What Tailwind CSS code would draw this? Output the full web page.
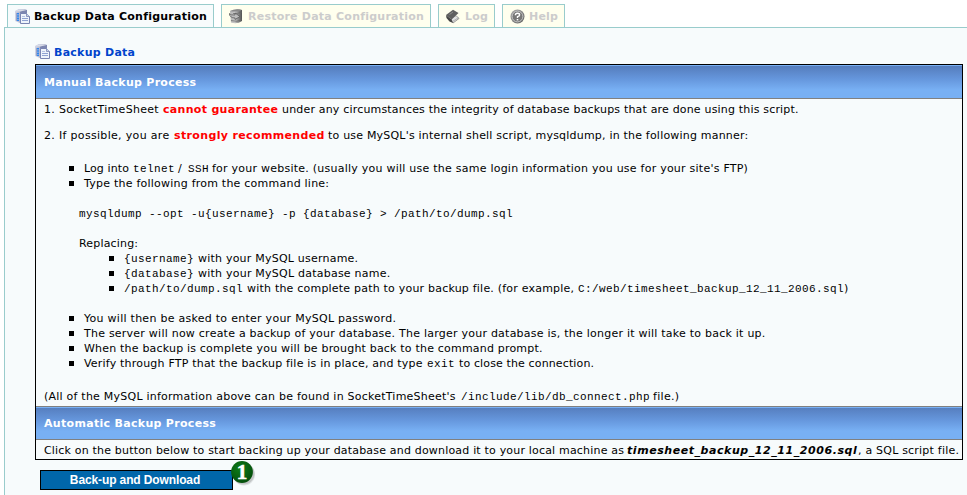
<!DOCTYPE html>
<html lang="en">
<head>
<meta charset="utf-8">
<title>Backup Data Configuration</title>
<script src="https://cdn.jsdelivr.net/npm/@tailwindcss/browser@4"></script>
</head>
<body class="h-[495px] overflow-hidden bg-white font-['DejaVu_Sans',sans-serif] text-[11px] leading-[15px] text-black">
<svg class="absolute size-0">
  <defs>
    <linearGradient id="srv" x1="0" x2="1"><stop offset="0" stop-color="#d3d6e6"/><stop offset=".5" stop-color="#a9afcb"/><stop offset="1" stop-color="#8088b0"/></linearGradient>
    <linearGradient id="drum" x1="0" x2="1"><stop offset="0" stop-color="#b4b4b4"/><stop offset=".4" stop-color="#c6c6c6"/><stop offset="1" stop-color="#505050"/></linearGradient>
    <linearGradient id="ball" x1="0" y1="0" x2="1" y2="1"><stop offset="0" stop-color="#aaa"/><stop offset="1" stop-color="#5c5c5c"/></linearGradient>
    <radialGradient id="green" cx=".4" cy=".35" r=".7"><stop offset="0" stop-color="#0d7d18"/><stop offset="1" stop-color="#044d0b"/></radialGradient>
    <symbol id="backup" viewBox="0 0 15 15">
      <path d="M0 2 4 0h5l3 1v10l-7 3-5-2z" fill="url(#srv)"/>
      <path d="M5 2.500 12 1v4H7v8l-2 1z" fill="#7d86b0"/>
      <path d="M0 2.200 4 .3h5l2.500.8L5 2.600z" fill="#d9dce8"/>
      <path d="M1.500 4v8" stroke="#9aa4c8"/>
      <path d="M3 4v8" stroke="#2f86ee" stroke-width="2" stroke-dasharray="1.500 .7"/>
      <path d="M5.500 4.500h6l3 3v7h-9z" fill="#eef3fb" stroke="#7984b2"/>
      <path d="M11.500 4.500v3h3" fill="#c8d3ea" stroke="#7984b2" stroke-width=".8"/>
      <path d="M7 9.500h6M7 11.500h6" stroke="#8fa2d2"/>
      <path d="M7 7.500h3" stroke="#b5c2e2"/>
    </symbol>
  </defs>
</svg>

<nav class="flex h-[27px] items-end gap-[7px] pl-[7px] pt-[4px] font-bold">
  <div class="flex h-[23px] w-[207px] items-start border border-b-0 border-[#99cccc] bg-[#f7fbfc] pl-[7px] pt-[4px]">
    <svg class="size-[15px] shrink-0"><use href="#backup"/></svg>
    <span class="ml-[4px] whitespace-nowrap tracking-[.23px]">Backup Data Configuration</span>
  </div>
  <div class="flex h-[23px] w-[210px] items-start border border-b-0 border-[#99cccc] bg-[#ffffee] pl-[7px] pt-[4px] text-[#cccccc]">
    <svg class="h-[15px] w-[14px] shrink-0" viewBox="0 0 14 15">
      <path d="M1 2Q7-.8 13 1v11q-5 3.500-11 1.500z" fill="url(#drum)"/>
      <path d="M1 2Q7-.8 13 1 8 3.500 1 2z" fill="#888"/>
      <path d="M2 11.500q6 2 11-.8M4 4.500q5 .5 9-1.500" fill="none" stroke="#666" stroke-width=".7"/>
      <path d="M0 4.500q2 2 6 1.500V4l5 3.500-5 3V9Q1 9 0 4.500z" fill="#bdbdbd" stroke="#505050" stroke-width=".7"/>
    </svg>
    <span class="ml-[5px] whitespace-nowrap tracking-[.23px]">Restore Data Configuration</span>
  </div>
  <div class="flex h-[23px] w-[57px] items-start border border-b-0 border-[#99cccc] bg-[#ffffee] pl-[7px] pt-[4px] text-[#cccccc]">
    <svg class="h-[15px] w-[14px] shrink-0" viewBox="0 0 14 15">
      <path d="M5 10 10 6.500 13 9.500 7 14z" fill="#e2e2e2" stroke="#777" stroke-width=".7"/>
      <path d="M0 6 7 .8 12.500 4 5.500 10.500z" fill="#606060"/>
      <path d="M0 6 5.500 10.500 7 14 3.500 12.500.5 9z" fill="#444"/>
      <path d="M3.500 5.500 7 3" stroke="#999" stroke-width=".8"/>
      <path d="M6.500 12.500 12.500 8.700" stroke="#999" stroke-width=".7"/>
    </svg>
    <span class="ml-[5px] tracking-[.25px]">Log</span>
  </div>
  <div class="flex h-[23px] w-[63px] items-start border border-b-0 border-[#99cccc] bg-[#ffffee] pl-[7px] pt-[4px] text-[#cccccc]">
    <svg class="size-[15px] shrink-0" viewBox="0 0 15 15">
      <circle cx="7.500" cy="7.500" r="7" fill="url(#ball)"/>
      <circle cx="7.500" cy="7.500" r="5.400" fill="#777" stroke="#ccc" stroke-width=".9"/>
      <path d="M5.400 6.200q0-2 2.100-2t2.100 1.700Q9.600 7 7.500 7.700v1.300" fill="none" stroke="#fff" stroke-width="1.400"/>
      <path d="M6.700 10h1.600v1.400H6.700z" fill="#fff"/>
    </svg>
    <span class="ml-[4px] tracking-[.2px]">Help</span>
  </div>
</nav>

<main class="ml-[4px] h-[468px] border-l border-t border-[#99cccc] bg-[#f7fbfc] pl-[30px] pt-[16px]">
  <h1 class="flex h-[20px] items-start font-bold text-[#0044cc]">
    <svg class="size-[15px] shrink-0"><use href="#backup"/></svg>
    <span class="ml-[4px] pt-px tracking-[.26px]">Backup Data</span>
  </h1>

  <div class="flex h-[396px] w-[928px] flex-col whitespace-nowrap border border-black">
    <h2 class="h-[34px] shrink-0 border-b border-t border-b-[#808080] border-t-[#78b0f4] bg-linear-to-b from-[#557dbd] via-[#6596dc] via-40% to-[#78b0f4] to-75% pl-[8px] pt-[9px] font-bold tracking-[.29px] text-white">Manual Backup Process</h2>

    <div class="h-[307px] shrink-0 pl-[8px] pt-[3px]">
      <p class="flex"><span class="w-[119px] tracking-[.3px]">1. SocketTimeSheet</span><b class="w-[119px] tracking-[.31px] text-[#ff0000]">cannot guarantee</b><span class="tracking-[.18px]">under any circumstances the integrity of database backups that are done using this script.</span></p>
      <p class="mt-[11px] flex"><span class="w-[130px] tracking-[.32px]">2. If possible, you are</span><b class="w-[154px] tracking-[.36px] text-[#ff0000]">strongly recommended</b><span class="tracking-[.2px]">to use MySQL's internal shell script, mysqldump, in the following manner:</span></p>

      <ul class="mt-[18px] pl-[25px]">
        <li class="flex"><i class="mt-[5px] mr-[10px] size-[5px] bg-black"></i><span class="w-[49px] tracking-[.1px]">Log into</span><code class="mt-px w-[45px] font-['Liberation_Mono',monospace] tracking-[.4px]">telnet</code><span class="w-[10px]">/</span><code class="mt-px w-[24px] font-['Liberation_Mono',monospace] tracking-[.4px]">SSH</code><span class="tracking-[.24px]">for your website. (usually you will use the same login information you use for your site's FTP)</span></li>
        <li class="-mt-px flex"><i class="mt-[5px] mr-[10px] size-[5px] bg-black"></i><span class="tracking-[.23px]">Type the following from the command line:</span></li>
      </ul>

      <pre class="mt-[16px] pl-[35px] font-['Liberation_Mono',monospace] tracking-[.4px]">mysqldump --opt -u{username} -p {database} &gt; /path/to/dump.sql</pre>

      <p class="mt-[14px] pl-[35px] tracking-[.17px]">Replacing:</p>
      <ul class="pl-[65px]">
        <li class="flex h-[15px]"><i class="mt-[5px] mr-[10px] size-[5px] bg-black"></i><code class="mt-px w-[74px] font-['Liberation_Mono',monospace] tracking-[.4px]">{username}</code><span class="tracking-[.22px]">with your MySQL username.</span></li>
        <li class="flex h-[15px]"><i class="mt-[5px] mr-[10px] size-[5px] bg-black"></i><code class="mt-px w-[74px] font-['Liberation_Mono',monospace] tracking-[.4px]">{database}</code><span class="tracking-[.23px]">with your MySQL database name.</span></li>
        <li class="flex h-[15px]"><i class="mt-[5px] mr-[10px] size-[5px] bg-black"></i><code class="mt-px w-[123px] font-['Liberation_Mono',monospace] tracking-[.4px]">/path/to/dump.sql</code><span class="w-[331px] tracking-[.21px]">with the complete path to your backup file. (for example,</span><code class="mt-px font-['Liberation_Mono',monospace] tracking-[.4px]">C:/web/timesheet_backup_12_11_2006.sql</code><span>)</span></li>
      </ul>

      <ul class="mt-[15px] pl-[25px]">
        <li class="flex"><i class="mt-[5px] mr-[10px] size-[5px] bg-black"></i><span class="tracking-[.27px]">You will then be asked to enter your MySQL password.</span></li>
        <li class="flex"><i class="mt-[5px] mr-[10px] size-[5px] bg-black"></i><span class="tracking-[.235px]">The server will now create a backup of your database. The larger your database is, the longer it will take to back it up.</span></li>
        <li class="flex"><i class="mt-[5px] mr-[10px] size-[5px] bg-black"></i><span class="tracking-[.195px]">When the backup is complete you will be brought back to the command prompt.</span></li>
        <li class="flex h-[15px]"><i class="mt-[5px] mr-[10px] size-[5px] bg-black"></i><span class="w-[343px] tracking-[.2px]">Verify through FTP that the backup file is in place, and type</span><code class="mt-px w-[32px] font-['Liberation_Mono',monospace] tracking-[.4px]">exit</code><span class="tracking-[.13px]">to close the connection.</span></li>
      </ul>

      <p class="mt-[18px] flex"><span class="w-[417px] tracking-[.23px]">(All of the MySQL information above can be found in SocketTimeSheet's</span><code class="mt-px w-[192px] font-['Liberation_Mono',monospace] tracking-[.4px]">/include/lib/db_connect.php</code><span class="tracking-[.3px]">file.)</span></p>
    </div>

    <h2 class="h-[34px] shrink-0 border-b border-t border-[#808080] bg-linear-to-b from-[#557dbd] via-[#6596dc] via-40% to-[#78b0f4] to-75% pl-[8px] pt-[9px] font-bold tracking-[.31px] text-white shadow-[inset_0_1px_0_#78b0f4]">Automatic Backup Process</h2>

    <p class="flex pl-[8px] pt-[3px]"><span class="w-[583px] tracking-[.185px]">Click on the button below to start backing up your database and download it to your local machine as</span><b class="w-[231px] italic tracking-[.56px]">timesheet_backup_12_11_2006.sql</b><span class="tracking-[.21px]">, a SQL script file.</span></p>
  </div>

  <div class="relative ml-[5px] mt-[10px] w-[193px]">
    <button class="block h-[20px] w-full border border-black bg-[#0066aa] pr-[3px] font-['Liberation_Sans',sans-serif] text-[12px] leading-[18px] font-bold tracking-[-.12px] text-white">Back-up and Download</button>
    <svg class="absolute -top-[10px] left-[190px] size-[28px]" viewBox="0 0 28 28">
      <circle cx="14" cy="14.500" r="11" fill="#000" opacity=".1"/>
      <circle cx="13.500" cy="13.500" r="11" fill="#000" opacity=".12"/>
      <circle cx="12" cy="12" r="10.900" fill="url(#green)"/>
      <text x="12" y="19" text-anchor="middle" font-family="Liberation Serif, serif" font-weight="bold" font-size="21" fill="#fff" stroke="#fff" stroke-width=".6">1</text>
    </svg>
  </div>
</main>
</body>
</html>
